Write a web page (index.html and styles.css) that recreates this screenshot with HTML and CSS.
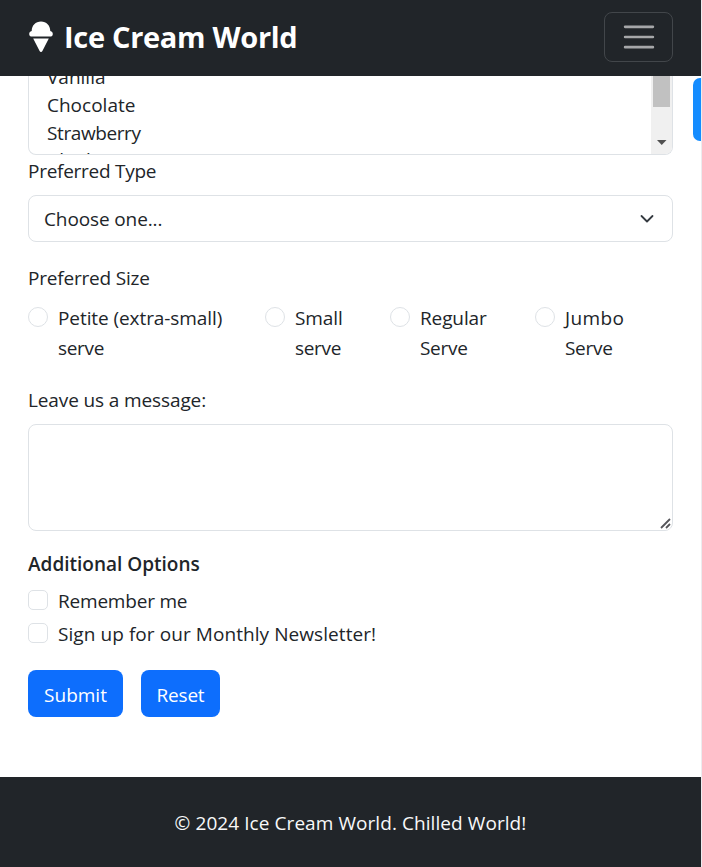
FILE: index.html
```html
<!DOCTYPE html>
<html lang="en">
<head>
<meta charset="utf-8">
<title>Ice Cream World</title>
<link rel="stylesheet" href="styles.css">
</head>
<body>
<div class="page">
  <header class="navbar">
    <a class="brand">
      <svg class="cone" width="24" height="32" viewBox="0 0 24 32" fill="#fff"><path d="M2.7 10C2.7 4.400 6.600.4 12 .4S21.300 4.400 21.300 10C22.900 10.300 23.800 11.500 23.800 12.900C23.800 14.600 22.600 15.600 21 15.600H3C1.400 15.600.2 14.600.2 12.900C.2 11.500 1.100 10.300 2.700 10ZM4.200 17.400H19.800L13.400 30C12.800 31.300 11.200 31.300 10.600 30Z"/></svg>
      <span class="brand-name">Ice Cream World</span>
    </a>
    <button class="toggler" aria-label="Menu"><svg width="38" height="38" viewBox="0 0 30 30"><path stroke="#a6a7a9" stroke-linecap="round" stroke-width="2" d="M4 7h22M4 15h22M4 23h22"/></svg></button>
  </header>
  <main class="content">
    <div class="listbox">
      <ul class="options">
        <li>Vanilla</li><li>Chocolate</li><li class="t-strawberry">Strawberry</li><li class="t-last">Blueberry</li>
      </ul>
      <div class="scrollbar"><div class="thumb"></div><svg width="10" height="5" viewBox="0 0 10 5"><path fill="#505050" d="M0 0h9.500L4.750 5z"/></svg></div>
    </div>
    <div class="label type-label"><span class="t-type">Preferred Type</span></div>
    <div class="select"><span class="t-choose">Choose one...</span><svg width="16" height="16" viewBox="0 0 16 16"><path fill="none" stroke="#343a40" stroke-linecap="round" stroke-linejoin="round" stroke-width="1.800" d="m2.500 5 5.500 5.500 5.500-5.500"/></svg></div>
    <div class="label size-label"><span class="t-size">Preferred Size</span></div>
    <div class="radios">
      <label class="check"><span class="box round"></span><span><span class="t-petite">Petite (extra-small)</span><br><span class="t-serve">serve</span></span></label>
      <label class="check"><span class="box round"></span><span><span class="t-small">Small</span><br><span class="t-serve">serve</span></span></label>
      <label class="check"><span class="box round"></span><span><span class="t-regular">Regular</span><br><span class="t-serve">Serve</span></span></label>
      <label class="check"><span class="box round"></span><span><span class="t-jumbo">Jumbo</span><br><span class="t-serve">Serve</span></span></label>
    </div>
    <div class="label message-label"><span class="t-message">Leave us a message:</span></div>
    <div class="textarea"><svg width="11" height="11" viewBox="0 0 11 11"><path d="M1 10 10 1M6 10 10 6" stroke="#55555a" stroke-width="1.800"/></svg></div>
    <div class="legend"><span>Additional Options</span></div>
    <label class="check line"><span class="box"></span><span class="t-remember">Remember me</span></label>
    <label class="check line"><span class="box"></span><span class="t-news">Sign up for our Monthly Newsletter!</span></label>
    <div class="buttons"><button class="btn submit">Submit</button><button class="btn reset"><span class="t-reset">Reset</span></button></div>
  </main>
  <footer class="footer"><span class="t-footer">© 2024 Ice Cream World. Chilled World!</span></footer>
  <div class="side-tab"></div>
</div>
</body>
</html>
```
FILE: styles.css
```css
* { box-sizing: border-box; }
body { margin: 0; background: #fff; color: #212529; font: 19px/30px "Open Sans", "Noto Sans", sans-serif; }
.page { position: relative; height: 867px; border-right: 1px solid #ececef; display: flex; flex-direction: column; overflow: hidden; }
.navbar { height: 76px; flex: none; background: #212529; display: flex; justify-content: space-between; align-items: center; padding: 0 28px 2px 29px; }
.brand { display: flex; align-items: center; gap: 11px; color: #fff; font-size: 29px; font-weight: 700; }
.brand-name { letter-spacing: -.3px; white-space: nowrap; }
.toggler { width: 69px; height: 50px; padding: 0; background: none; border: 1px solid #42464a; border-radius: 8px; display: flex; align-items: center; justify-content: center; }
.content { height: 701px; flex: none; padding: 0 28px; display: flex; flex-direction: column; white-space: nowrap; }
.listbox { height: 79px; flex: none; border: 1px solid #dee2e6; border-top: 0; border-radius: 0 0 8px 8px; display: flex; justify-content: space-between; overflow: hidden; }
.options { list-style: none; margin: -13px 0 0; padding: 0 0 0 18px; line-height: 28px; }
.scrollbar { width: 21px; background: #f0f0f0; display: flex; flex-direction: column; align-items: center; justify-content: space-between; padding-bottom: 9px; }
.thumb { width: 17px; height: 31px; background: #c1c1c1; }
.label { height: 30px; flex: none; }
.type-label { margin-top: 1px; }
.select { height: 47px; flex: none; margin-top: 9px; border: 1px solid #dee2e6; border-radius: 8px; display: flex; align-items: center; justify-content: space-between; padding: 0 17px 0 15px; }
.size-label { margin-top: 21px; }
.radios { display: grid; grid-template-columns: 237px 125px 145px 1fr; margin-top: 10px; }
.check { display: flex; gap: 10px; }
.box { width: 20px; height: 20px; flex: none; margin-top: 4px; border: 1px solid #dee2e6; border-radius: 5px; }
.round { border-radius: 50%; }
.message-label { margin-top: 22px; }
.textarea { height: 107px; flex: none; margin-top: 9px; border: 1px solid #dee2e6; border-radius: 8px; display: flex; align-items: flex-end; justify-content: flex-end; padding: 1px; }
.legend { height: 30px; margin-top: 18px; font-weight: 600; }
.line { height: 30px; margin-top: 7px; }
.line + .line { margin-top: 3px; }
.buttons { display: flex; gap: 18px; margin-top: 21px; }
.btn { height: 47px; padding: 2px 0 0; border: 0; border-radius: 8px; background: #0d6efd; color: #fff; font: inherit; }
.submit { width: 95px; }
.reset { width: 79px; }
.footer { flex: 1; background: #212529; color: #f8f9fa; display: flex; align-items: center; justify-content: center; padding-top: 2px; white-space: nowrap; }
.side-tab { position: absolute; right: 0; top: 78px; width: 8px; height: 63px; border-radius: 7px 0 0 7px; background: #148cff; }

/* Tracking per label */
.t-strawberry { letter-spacing: -.4px; }
.t-last { margin-top: -1px; letter-spacing: -.1px; }
.t-type { letter-spacing: -.27px; }
.t-size { letter-spacing: -.2px; }
.t-choose { letter-spacing: -.12px; }
.t-petite { letter-spacing: -.08px; }
.t-small, .t-regular { letter-spacing: -.12px; }
.t-serve { letter-spacing: -.3px; }
.t-jumbo { letter-spacing: .4px; }
.t-message { letter-spacing: -.12px; }
.t-remember { letter-spacing: -.2px; }
.t-news { letter-spacing: .07px; }
.t-reset { letter-spacing: -.2px; }
.t-footer { letter-spacing: .07px; }
```
